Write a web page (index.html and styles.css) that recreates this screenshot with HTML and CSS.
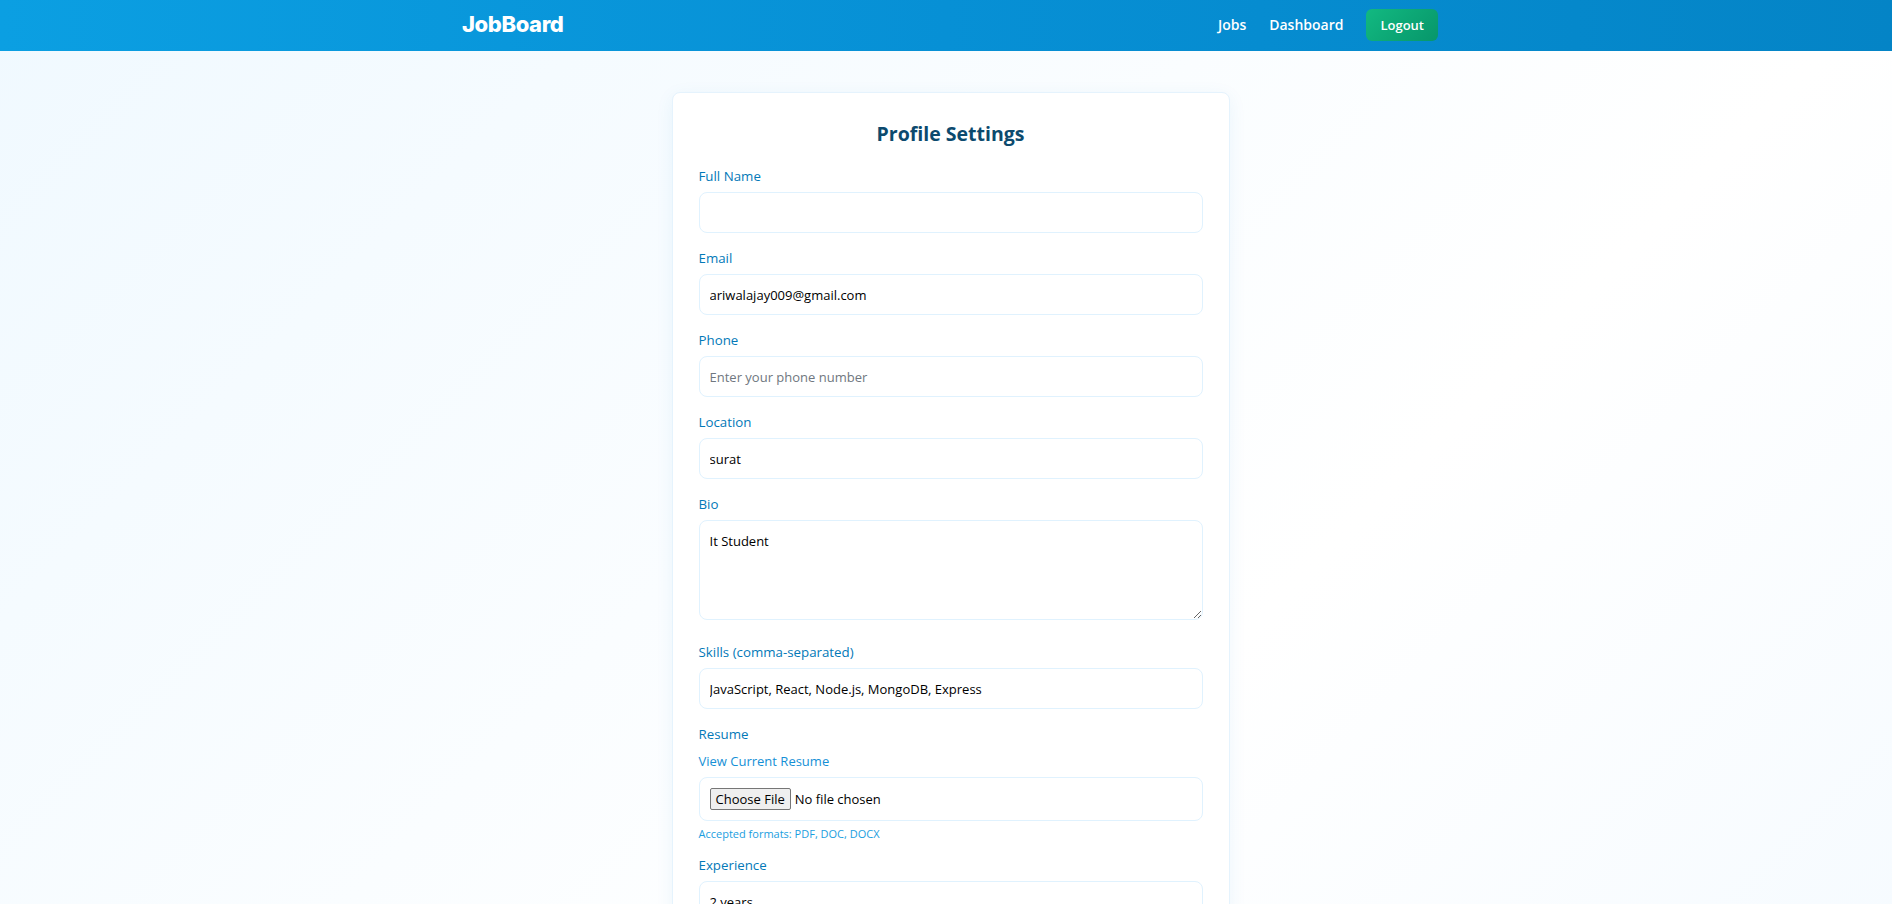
FILE: index.html
```html
<!DOCTYPE html>
<html lang="en">
<head>
<meta charset="utf-8">
<title>Profile Settings - JobBoard</title>
<link rel="stylesheet" href="styles.css">
</head>
<body>
<header class="topbar">
  <div class="topbar-inner">
    <a class="logo" href="#">JobBoard</a>
    <nav class="nav">
      <a href="#" class="nav-link">Jobs</a>
      <a href="#" class="nav-link">Dashboard</a>
      <button type="button" class="logout">Logout</button>
    </nav>
  </div>
</header>
<main class="main">
  <section class="card">
    <h1 class="title">Profile Settings</h1>
    <form class="form">
      <div class="field">
        <label class="label" for="name">Full Name</label>
        <input class="input" id="name" type="text">
      </div>
      <div class="field">
        <label class="label" for="email">Email</label>
        <input class="input" id="email" type="email" value="ariwalajay009@gmail.com">
      </div>
      <div class="field">
        <label class="label" for="phone">Phone</label>
        <input class="input" id="phone" type="tel" placeholder="Enter your phone number">
      </div>
      <div class="field">
        <label class="label" for="location">Location</label>
        <input class="input" id="location" type="text" value="surat">
      </div>
      <div class="field field-bio">
        <label class="label" for="bio">Bio</label>
        <textarea class="input textarea" id="bio">It Student</textarea>
      </div>
      <div class="field">
        <label class="label" for="skills">Skills (comma-separated)</label>
        <input class="input" id="skills" type="text" value="JavaScript, React, Node.js, MongoDB, Express">
      </div>
      <div class="field field-resume">
        <span class="label">Resume</span>
        <a href="#" class="resume-link">View Current Resume</a>
        <div class="file-box">
          <input class="file" type="file" id="resume">
        </div>
        <p class="hint">Accepted formats: PDF, DOC, DOCX</p>
      </div>
      <div class="field">
        <label class="label" for="experience">Experience</label>
        <input class="input" id="experience" type="text" value="2 years">
      </div>
      <div class="field">
        <label class="label" for="education">Education</label>
        <input class="input" id="education" type="text" value="">
      </div>
      <button type="submit" class="save">Save Changes</button>
    </form>
  </section>
</main>
</body>
</html>
```

FILE: styles.css
```css
* {
  box-sizing: border-box;
}

html,
body {
  margin: 0;
  padding: 0;
}

body {
  font-family: "Open Sans", "Noto Sans", sans-serif;
  background: linear-gradient(135deg, #f0f9ff 0%, #ffffff 62%, #f4faff 100%);
  min-height: 100vh;
  color: #0f172a;
}

.topbar {
  height: 51px;
  background: linear-gradient(90deg, #0b9fe2 0%, #0790d5 50%, #0484c6 100%);
}

.topbar-inner {
  max-width: 1024px;
  height: 100%;
  margin: 0 auto;
  padding: 0 20px 0 28px;
  display: flex;
  align-items: center;
  justify-content: space-between;
}

.logo {
  font-family: "Inter", "Liberation Sans", sans-serif;
  font-weight: 800;
  font-size: 22px;
  letter-spacing: -0.4px;
  color: #ffffff;
  text-decoration: none;
  line-height: 1;
  margin-top: -3px;
}

.nav {
  display: flex;
  align-items: center;
  gap: 23px;
}

.nav-link {
  color: #ffffff;
  text-decoration: none;
  font-size: 14px;
  font-weight: 600;
  line-height: 20px;
  margin-top: -1px;
}

.logout {
  font-family: inherit;
  font-size: 13px;
  font-weight: 600;
  color: #ffffff;
  background: linear-gradient(135deg, #12b981 0%, #07966a 100%);
  border: none;
  border-radius: 6px;
  height: 32px;
  padding: 0 14px;
  margin-top: -2px;
  cursor: pointer;
}

.main {
  display: flex;
  justify-content: center;
  padding: 41px 0 40px 9px;
}

.card {
  width: 558px;
  background: #ffffff;
  border: 1px solid #e5f3fd;
  border-radius: 8px;
  box-shadow: 0 4px 18px rgba(2, 132, 199, 0.07);
  padding: 26px 26px 30px;
}

.title {
  margin: 0 0 17px;
  text-align: center;
  font-size: 19.5px;
  line-height: 30px;
  font-weight: 700;
  color: #0c4a6e;
}

.form {
  display: flex;
  flex-direction: column;
}

.field {
  display: flex;
  flex-direction: column;
  margin-bottom: 15px;
}

.label {
  display: block;
  font-size: 13.3px;
  line-height: 20px;
  color: #0379b8;
  margin-bottom: 6px;
}

.input {
  display: block;
  width: 100%;
  height: 41px;
  border: 1px solid #e0f2fe;
  border-radius: 8px;
  background: #ffffff;
  padding: 0 10px;
  font-family: "Open Sans", "Noto Sans", sans-serif;
  font-size: 13px;
  color: #000000;
  outline: none;
}

.input::placeholder {
  color: #6f7780;
}

.textarea {
  height: 100px;
  padding: 10px;
  line-height: 20px;
  resize: vertical;
  margin-bottom: 7px;
}

.resume-link {
  display: block;
  font-size: 13px;
  line-height: 20px;
  color: #1590d6;
  text-decoration: none;
  margin-top: 1px;
  margin-bottom: 6px;
}

.file-box {
  border: 1px solid #e0f2fe;
  border-radius: 8px;
  padding: 9px 10px;
  height: 44px;
  display: flex;
  align-items: center;
}

.file {
  font-family: "Open Sans", "Noto Sans", sans-serif;
  font-size: 13px;
  color: #000000;
}

.file::file-selector-button {
  font-family: "Open Sans", "Noto Sans", sans-serif;
  font-size: 13px;
  color: #000000;
  background: #efefef;
  border: 1px solid #767676;
  border-radius: 2px;
  height: 22px;
  padding: 0 5px;
  margin-right: 4px;
}

.hint {
  margin: 4px 0 0;
  font-size: 11px;
  line-height: 18px;
  color: #1a9ee0;
}

.field-resume {
  margin-bottom: 12px;
}

.save {
  margin-top: 8px;
  height: 42px;
  border: none;
  border-radius: 8px;
  background: linear-gradient(90deg, #0ea5e9, #0284c7);
  color: #ffffff;
  font-family: inherit;
  font-size: 14px;
  font-weight: 600;
}
```
